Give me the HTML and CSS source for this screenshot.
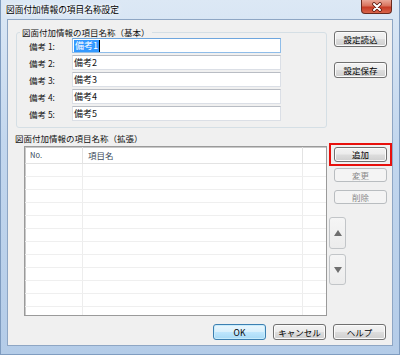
FILE: index.html
```html
<!DOCTYPE html>
<html lang="ja">
  <head>
    <meta charset="UTF-8" />
    <title>図面付加情報の項目名称設定</title>
    <link rel="stylesheet" href="styles.css">
  </head>
  <body>
    <div class="window">
      <div class="titlebar">
        <span class="title">図面付加情報の項目名称設定</span>
        <span class="close">
          <svg width="14" height="10" viewBox="0 0 14 10">
            <path d="M4 2 L10 8 M10 2 L4 8" stroke="#5b1a10" stroke-width="3.6" stroke-linecap="round" />
            <path d="M4 2 L10 8 M10 2 L4 8" stroke="#fff" stroke-width="2" stroke-linecap="round" />
          </svg>
        </span>
      </div>

      <div class="client">
        <div class="top">
          <fieldset class="group">
            <legend>図面付加情報の項目名称（基本）</legend>
            <div class="rows">
              <div class="field">
                <label>備考 1:</label>
                <div class="textbox focused"><span class="selected">備考1</span></div>
              </div>
              <div class="field">
                <label>備考 2:</label>
                <div class="textbox">備考2</div>
              </div>
              <div class="field">
                <label>備考 3:</label>
                <div class="textbox">備考3</div>
              </div>
              <div class="field">
                <label>備考 4:</label>
                <div class="textbox">備考4</div>
              </div>
              <div class="field">
                <label>備考 5:</label>
                <div class="textbox">備考5</div>
              </div>
            </div>
          </fieldset>
          <div class="side">
            <button class="btn">設定読込</button>
            <button class="btn">設定保存</button>
          </div>
        </div>

        <div class="middle">
          <div class="list-area">
            <div class="section-label">図面付加情報の項目名称（拡張）</div>
            <div class="grid">
              <div class="grid-row header">
                <div class="cell">No.</div>
                <div class="cell">項目名</div>
                <div class="cell"></div>
              </div>
              <div class="grid-row"><div class="cell"></div><div class="cell"></div><div class="cell"></div></div>
              <div class="grid-row"><div class="cell"></div><div class="cell"></div><div class="cell"></div></div>
              <div class="grid-row"><div class="cell"></div><div class="cell"></div><div class="cell"></div></div>
              <div class="grid-row"><div class="cell"></div><div class="cell"></div><div class="cell"></div></div>
              <div class="grid-row"><div class="cell"></div><div class="cell"></div><div class="cell"></div></div>
              <div class="grid-row"><div class="cell"></div><div class="cell"></div><div class="cell"></div></div>
              <div class="grid-row"><div class="cell"></div><div class="cell"></div><div class="cell"></div></div>
              <div class="grid-row"><div class="cell"></div><div class="cell"></div><div class="cell"></div></div>
              <div class="grid-row"><div class="cell"></div><div class="cell"></div><div class="cell"></div></div>
              <div class="grid-row"><div class="cell"></div><div class="cell"></div><div class="cell"></div></div>
              <div class="grid-row"><div class="cell"></div><div class="cell"></div><div class="cell"></div></div>
              <div class="grid-row"><div class="cell"></div><div class="cell"></div><div class="cell"></div></div>
            </div>
          </div>

          <div class="side-list">
            <div class="highlight">
              <button class="btn">追加</button>
            </div>
            <button class="btn" disabled>変更</button>
            <button class="btn" disabled>削除</button>
            <button class="arrow up">
              <svg width="8" height="6" viewBox="0 0 8 6"><polygon points="4,0 8,6 0,6" fill="#6f6f6f" /></svg>
            </button>
            <button class="arrow down">
              <svg width="8" height="6" viewBox="0 0 8 6"><polygon points="0,0 8,0 4,6" fill="#6f6f6f" /></svg>
            </button>
          </div>
        </div>

        <div class="footer">
          <button class="btn default">OK</button>
          <button class="btn">キャンセル</button>
          <button class="btn">ヘルプ</button>
        </div>
      </div>
    </div>
  </body>
</html>
```

FILE: styles.css
```css
body {
  margin: 0;
  font-family: "Noto Sans CJK JP", "Noto Sans", sans-serif;
  font-size: 8.5px;
  color: #111;
  background: #fff;
}

.window {
  width: 400px;
  height: 355px;
  box-sizing: border-box;
  padding: 0 6px 8px 6px;
  border: 1px solid #7f9cc0;
  border-top: none;
  background: linear-gradient(to bottom, #dce8f5, #c3d7ee 40%, #b4cce8);
  display: flex;
  flex-direction: column;
}

.titlebar {
  height: 19px;
  display: flex;
  align-items: flex-start;
  justify-content: space-between;
  margin-left: -1px;
}

.title {
  font-size: 8.7px;
  line-height: 19px;
  color: #000;
  text-shadow: 0 0 6px #fff, 0 0 3px #fff;
}

.close {
  width: 31px;
  height: 14px;
  margin-right: 1px;
  box-sizing: border-box;
  border: 1px solid #6a2a1e;
  border-top: none;
  border-radius: 0 0 4px 4px;
  background: linear-gradient(to bottom, #eaa797, #d9735d 45%, #c63b25 55%, #d8644a);
  display: flex;
  align-items: center;
  justify-content: center;
}

.client {
  flex: 1;
  border: 1px solid #8ea6c4;
  background: #f0f0f0;
  display: flex;
  flex-direction: column;
}

/* upper block */
.top {
  display: flex;
  align-items: flex-start;
  margin-top: 7px;
  padding-left: 8px;
}

.group {
  width: 311px;
  box-sizing: border-box;
  margin: 0;
  padding: 0;
  border: 1px solid #d5dfe5;
  border-radius: 3px;
}

.group legend {
  margin-left: 3px;
  padding: 0 2px;
  line-height: 11px;
}

.rows {
  display: flex;
  flex-direction: column;
  gap: 2px;
  padding: 0 0 6px 12px;
}

.field {
  display: flex;
  align-items: center;
  height: 15px;
}

.field label {
  width: 43px;
}

.textbox {
  width: 209px;
  height: 15px;
  box-sizing: border-box;
  border: 1px solid #dbdfe6;
  border-top-color: #b9bdc4;
  background: #fff;
  padding-left: 1px;
  line-height: 13px;
  font-size: 9px;
}

.textbox.focused {
  border-color: #8fbde9;
  border-top-color: #6ea6de;
}

.selected {
  display: inline-block;
  padding: 0 1px;
  background: #3399ff;
  color: #fff;
  border-right: 1px solid #000;
  line-height: 12px;
  margin-top: 1px;
}

.side {
  display: flex;
  flex-direction: column;
  gap: 15px;
  margin-left: 7px;
  margin-top: 4px;
}

/* buttons */
.btn {
  width: 53px;
  height: 16px;
  padding: 0;
  box-sizing: border-box;
  border: 1px solid #707070;
  border-radius: 3px;
  background: linear-gradient(to bottom, #f3f3f3, #ebebeb 48%, #dddddd 52%, #cfcfcf);
  box-shadow: inset 0 0 0 1px #fbfbfb;
  font-family: inherit;
  font-size: 8.5px;
  line-height: 13px;
  color: #000;
}

.btn:disabled {
  border-color: #b9bdc0;
  background: #f4f4f4;
  box-shadow: none;
  color: #8a8a8a;
}

.btn.default {
  border-color: #3c7fb1;
  background: linear-gradient(to bottom, #eaf6fd, #d9f0fc 48%, #bee6fd 52%, #a7d9f5);
  box-shadow: inset 0 0 0 1px #c8ecfc;
}

/* list section */
.middle {
  display: flex;
  align-items: flex-start;
}

.list-area {
  display: flex;
  flex-direction: column;
  margin-left: 7px;
}

.section-label {
  margin-top: 5px;
  line-height: 11px;
}

.grid {
  width: 303px;
  height: 170px;
  box-sizing: border-box;
  margin-top: 2px;
  margin-left: 9px;
  border: 1px solid #9a9a9a;
  box-shadow: inset 1px 1px 0 #c9c9c9;
  background: #fff;
  overflow: hidden;
}

.grid-row {
  display: grid;
  grid-template-columns: 58px 220px 1fr;
  height: 13px;
  box-sizing: border-box;
  border-bottom: 1px solid #efefef;
}

.grid-row.header {
  height: 17px;
  border-bottom-color: #e3e3e3;
  color: #3a4a5a;
}

.cell {
  border-right: 1px solid #ededed;
  padding-left: 5px;
  line-height: 16px;
}

.header .cell {
  border-right-color: #e3e3e3;
}

.header .cell:first-child {
  font-size: 7.5px;
}

.cell:last-child {
  border-right: none;
}

.side-list {
  display: flex;
  flex-direction: column;
  align-items: flex-start;
  margin-left: 2px;
  margin-top: 15px;
}

.highlight {
  border: 2px solid #e8100c;
  padding: 2px 3px 2px 3px;
}

.highlight .btn {
  height: 15px;
}

.side-list > .btn {
  margin-left: 5px;
  margin-top: 2px;
  height: 14px;
}

.side-list > .btn + .btn {
  margin-top: 8px;
}

.arrow {
  width: 17px;
  padding: 0;
  border: 1px solid #c2c5c8;
  border-radius: 3px;
  background: linear-gradient(to bottom, #f5f5f5, #ececec);
  display: flex;
  align-items: center;
  justify-content: center;
}

.arrow.up {
  height: 32px;
  margin-top: 13px;
}

.arrow.down {
  height: 31px;
  margin-top: 5px;
}

/* bottom buttons */
.footer {
  display: flex;
  justify-content: flex-end;
  gap: 7px;
  margin-top: 8px;
  padding-right: 6px;
}
```
